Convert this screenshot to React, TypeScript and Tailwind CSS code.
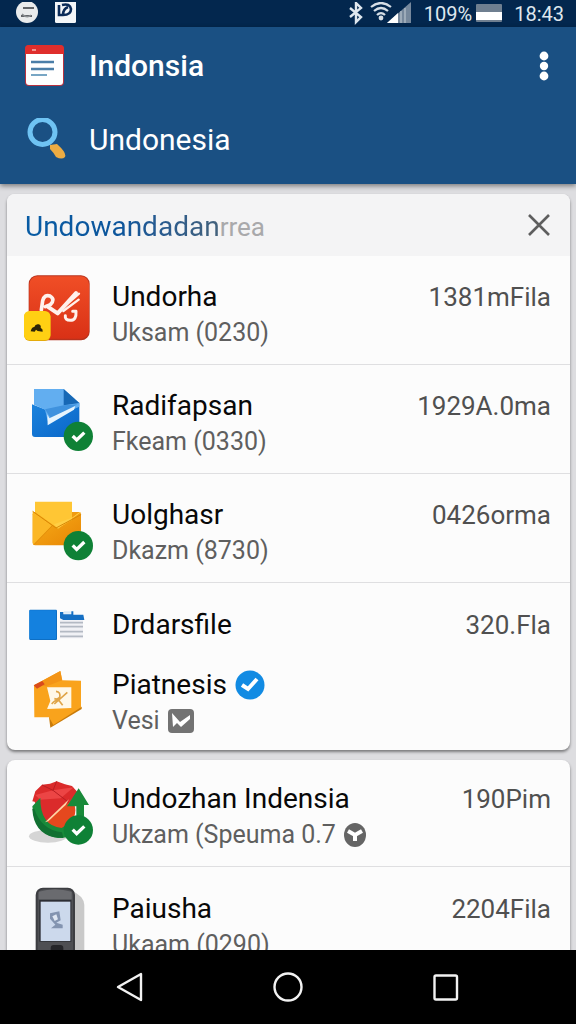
import { ReactNode } from "react";

function CheckBadge({ cx, cy }: { cx: number; cy: number }) {
  return (
    <g>
      <circle cx={cx} cy={cy} r="44" fill="#0f8136" />
      <path
        d={`M${cx - 17} ${cy - 1} l12 12 l23 -22`}
        fill="none"
        stroke="#fff"
        strokeWidth="10"
      />
    </g>
  );
}

function ReaderIcon() {
  return (
    <svg viewBox="60 267 228 210" className="h-[70px] w-[76px] overflow-visible" aria-hidden="true">
      <defs>
        <linearGradient id="reader" x1="0" y1="0" x2="0" y2="1">
          <stop offset="0" stopColor="#f04e26" />
          <stop offset="1" stopColor="#d93116" />
        </linearGradient>
      </defs>
      <rect x="86" y="256" width="183" height="195" rx="26" fill="#b8321d" />
      <rect x="88" y="259" width="179" height="187" rx="24" fill="url(#reader)" />
      <g fill="none" stroke="#fff1ec" strokeLinecap="round" strokeLinejoin="round">
        <path d="M124 360 L128 332 Q134 312 150 318 Q167 328 151 344 L136 350" strokeWidth="11" />
        <path d="M143 350 L173 370 L228 309" strokeWidth="12" />
        <path d="M190 352 L237 311 M190 363 L236 329" strokeWidth="7" />
        <path d="M196 377 Q194 391 211 391 Q230 391 228 364 L218 364" strokeWidth="9" />
      </g>
      <rect x="72" y="365" width="80" height="88" rx="17" fill="#e5ab0b" />
      <rect x="72" y="363" width="79" height="87" rx="16" fill="#ffd013" />
      <path d="M92 424 Q95 411 103 411 Q106 401 116 403 Q124 406 122 413 Q130 418 128 425 L113 423 L108 419 L104 425Z" fill="#2c2408" />
    </svg>
  );
}

function DocumentIcon() {
  return (
    <svg viewBox="60 54 228 210" className="h-[70px] w-[76px] overflow-visible" aria-hidden="true">
      <defs>
        <linearGradient id="doc" x1="0" y1="0" x2="1" y2="1">
          <stop offset="0" stopColor="#1b83dd" />
          <stop offset="1" stopColor="#0a66c8" />
        </linearGradient>
      </defs>
      <path d="M96 103 L140 120 L238 98 V201 H105 Q96 201 96 192Z" fill="url(#doc)" />
      <path d="M102 57 H191 L238 99 V110 L143 152 L135 119 L102 104Z" fill="#62aef0" />
      <path d="M191 57 L238 99 L191 106Z" fill="#1768b5" />
      <path d="M191 106 L232 103 L154 148 L135 118Z" fill="#3f92de" />
      <path d="M142 133 L148 145 L226 108 L222 119 L143 166Z" fill="#e6f4fd" />
      <CheckBadge cx={235} cy={199} />
    </svg>
  );
}

function EnvelopeIcon() {
  return (
    <svg viewBox="60 381 228 210" className="h-[70px] w-[76px] overflow-visible" aria-hidden="true">
      <defs>
        <linearGradient id="mail" x1="0" y1="0" x2="1" y2="1">
          <stop offset="0" stopColor="#f8ae19" />
          <stop offset="1" stopColor="#e78504" />
        </linearGradient>
      </defs>
      <rect x="98" y="426" width="145" height="100" rx="7" fill="url(#mail)" />
      <path d="M105 395 H216 V450 L173 475 L105 426Z" fill="#ffc634" />
      <path d="M98 424 L156 466 L101 523 Q98 521 98 515Z" fill="#fbb726" />
      <path d="M243 427 L174 476 L162 463 L216 443 L238 427Z" fill="#ffcf45" />
      <path d="M98 424 L168 474 L243 434" fill="none" stroke="#d98705" strokeWidth="3" />
      <path d="M157 467 L102 524" fill="none" stroke="#da8909" strokeWidth="2" />
      <CheckBadge cx={235} cy={527} />
    </svg>
  );
}

function FolderFileIcon() {
  return (
    <svg viewBox="60 111 228 108" className="h-9 w-[76px] overflow-visible" aria-hidden="true">
      <rect x="88" y="119" width="83" height="91" rx="3" fill="#0e6fc4" />
      <rect x="88" y="121" width="80" height="86" rx="2" fill="#1481df" />
      <rect x="180" y="148" width="69" height="57" fill="#f0f1f5" />
      <path d="M180 126 H190 V133 H214 V124 H220 V134 H250 L253 150 H190 L180 145Z" fill="#1670c4" />
      <path d="M192 124 H212 V131 H192Z" fill="#dbeaf7" />
      <path d="M180 158 H249 M180 170 H249 M180 185 H249 M180 199 H249" stroke="#b3b9c3" strokeWidth="5" />
    </svg>
  );
}

function PhotoIcon() {
  return (
    <svg viewBox="60 294 228 210" className="h-[70px] w-[76px] overflow-visible" aria-hidden="true">
      <path d="M147 445 L245 413 V420 L151 476Z" fill="#c97b0a" />
      <path d="M102 349 L181 306 L187 334 L243 335 V415 L160 468 L147 445 H103Z" fill="#f9a31c" />
      <path d="M102 349 L181 306 L186 334 L140 352Z" fill="#f39416" />
      <path d="M101 349 L127 336 L134 346 L111 359Z" fill="#d94b1d" />
      <path d="M141 355 H214 V417 L141 420 L151 396Z" fill="#fff8e7" />
      <path d="M168 367 Q183 369 179 385 Q173 392 163 389 M174 391 L188 409 M163 405 L202 370 M155 405 Q168 390 176 396" fill="none" stroke="#e0a547" strokeWidth="5" />
    </svg>
  );
}

function SyncIcon() {
  return (
    <svg viewBox="60 36 228 210" className="h-[70px] w-[76px] overflow-visible" aria-hidden="true">
      <ellipse cx="144" cy="202" rx="57" ry="19" fill="#d5d5d5" />
      <circle cx="168" cy="124" r="58" fill="#e5481e" />
      <path d="M97 97 L106 67 L126 47 L150 44 L170 37 L195 46 L216 51 L235 72 L205 101 L139 155 L116 126 L104 98Z" fill="#db2b2b" />
      <path d="M106 78 L159 64 L221 55 L182 88 L120 92Z" fill="#ec4545" />
      <path d="M126 48 L159 64 L170 37 M159 64 L206 100" fill="none" stroke="#b81e22" strokeWidth="3" />
      <path d="M97 112 L121 86 Q120 170 185 177 L229 148 V112 H201 L236 58 L267 108 H252 V140 Q242 207 174 207 Q104 198 97 112Z" fill="#198a3a" />
      <path d="M97 120 Q101 191 162 205 L190 207 L186 190 Q125 184 103 120Z" fill="#117031" />
      <path d="M135 160 L207 91 L197 108 L145 157Z" fill="#ffd5a6" />
      <CheckBadge cx={235} cy={183} />
    </svg>
  );
}

function PhoneIcon() {
  return (
    <svg viewBox="60 363 228 210" className="h-[70px] w-[76px] overflow-visible" aria-hidden="true">
      <path d="M210 360 Q252 377 253 405 V640 H200Z" fill="#c9c9c9" />
      <rect x="107" y="353" width="118" height="300" rx="22" fill="#3c3d41" />
      <rect x="113" y="358" width="106" height="290" rx="18" fill="#4e4f53" />
      <path d="M116 365 Q165 350 215 365 V388 H116Z" fill="#6a6b6f" />
      <rect x="118" y="390" width="96" height="125" fill="#2c2e34" />
      <rect x="122" y="395" width="89" height="118" fill="#ccd9ec" />
      <path d="M150 430 L178 424 L182 451 L169 458 L188 464 V475 H153 L166 464 L150 446Z" fill="#8394b0" />
      <path d="M157 439 L169 433 L174 448 L164 453Z" fill="#dfe7f2" />
      <rect x="152" y="525" width="38" height="30" rx="9" fill="#242529" />
    </svg>
  );
}

function VerifiedIcon() {
  return (
    <svg viewBox="0 0 30 30" className="h-[30px] w-[30px]" aria-hidden="true">
      <circle cx="15" cy="15" r="14.5" fill="#128be3" />
      <path d="M7 15 L13 19 L22 9" fill="none" stroke="#fff" strokeWidth="4" />
    </svg>
  );
}

function TickBoxIcon() {
  return (
    <svg viewBox="0 0 26 26" className="h-[26px] w-[26px]" aria-hidden="true">
      <rect x="0" y="1" width="26" height="24" rx="4" fill="#737373" />
      <path d="M4 5 L12 14 L22 7 L22 11 L13 19 L9 15 L5 19Z" fill="#fff" />
    </svg>
  );
}

function BranchIcon() {
  return (
    <svg viewBox="0 0 22 24" className="h-6 w-[22px]" aria-hidden="true">
      <ellipse cx="11" cy="12" rx="11" ry="12" fill="#656565" />
      <path d="M4 8 L11 12 L18 8 M11 11 V18" fill="none" stroke="#fff" strokeWidth="4" />
    </svg>
  );
}

type RowProps = {
  icon: ReactNode;
  name: string;
  detail?: string;
  size?: string;
  nameBadge?: ReactNode;
  detailBadge?: ReactNode;
  className?: string;
};

function AppRow({ icon, name, detail, size, nameBadge, detailBadge, className = "pt-[23px] pb-[13px] border-b" }: RowProps) {
  return (
    <li className={`flex items-start gap-4 border-[#dfdfe1] pl-[13px] pr-[19px] ${className}`}>
      <div className="shrink-0">{icon}</div>
      <div className="min-w-0 flex-1 whitespace-nowrap">
        <h3 className="flex items-center gap-2 text-[28px] leading-9 text-[#080808]">
          {name}
          {nameBadge}
        </h3>
        {detail && (
          <p className="flex items-center gap-2 text-[25px] leading-9 text-[#5f5f5f]">
            {detail}
            {detailBadge}
          </p>
        )}
      </div>
      {size && <span className="shrink-0 text-[26px] leading-9 text-[#505050]">{size}</span>}
    </li>
  );
}

export default function App() {
  return (
    <div className="flex h-screen flex-col overflow-hidden bg-[#dddde0] font-['Roboto',sans-serif]">
      <div className="flex h-[27px] shrink-0 items-center justify-between bg-[#03274e] pl-4 pr-3 text-[#dfe7ee]">
        <div className="flex items-center gap-4">
          <svg viewBox="0 0 22 24" className="h-6 w-[22px]" aria-hidden="true">
            <ellipse cx="11" cy="10" rx="11" ry="11" fill="#e9ebec" />
            <path d="M7 6 H18 M5 14 H16" stroke="#34383c" strokeWidth="1.5" />
            <path d="M6 12 Q11 17 15 13" fill="none" stroke="#8c9093" strokeWidth="1.5" />
          </svg>
          <svg viewBox="0 0 22 24" className="h-6 w-[22px]" aria-hidden="true">
            <rect x="1" y="-2" width="21" height="23" rx="1.5" fill="#f4f6f8" />
            <path d="M5 3 V13 H9 M8 3 Q16 1 17 7 Q17 13 9 13 Q9 7 14 5" fill="none" stroke="#0b2b58" strokeWidth="2.6" />
          </svg>
        </div>
        <div className="flex items-center">
          <svg viewBox="0 0 16 24" className="h-6 w-4" aria-hidden="true">
            <path d="M2 6 L13 15 L8 20 V1 L13 6 L2 15" fill="none" stroke="currentColor" strokeWidth="2.4" />
          </svg>
          <svg viewBox="0 0 42 24" className="ml-[6px] h-6 w-[42px]" aria-hidden="true">
            <g fill="none" stroke="#d6dee6" strokeWidth="2.2">
              <path d="M1 5 Q11 -3 21 5" />
              <path d="M4 9 Q11 3 18 9" />
              <path d="M7 13 Q11 9 15 13" />
            </g>
            <circle cx="11" cy="16" r="2.4" fill="#d6dee6" />
            <path d="M17 21 L41 0 V21Z" fill="#76889c" />
            <path d="M17 21 L28 11 V21Z" fill="#fff" />
            <path d="M31 9 V21 M35 6 V21" stroke="#aab6c2" strokeWidth="1.5" />
          </svg>
          <span className="ml-3 text-xl leading-6">109%</span>
          <svg viewBox="0 0 26 20" className="ml-1 h-5 w-[26px]" aria-hidden="true">
            <rect width="26" height="18" rx="1" fill="#6f7f90" />
            <rect y="8" width="26" height="8" fill="#fff" />
          </svg>
          <span className="ml-3 text-xl leading-6">18:43</span>
        </div>
      </div>

      <header className="relative shrink-0 bg-[#1a5083] px-6 pt-[2px] pb-[7px] text-white shadow-[0_2px_5px_rgba(0,0,0,0.45)]">
        <div className="flex h-[74px] items-center gap-[23px]">
          <svg viewBox="0 0 42 44" className="h-11 w-[42px] shrink-0" aria-hidden="true">
            <rect x="1" y="1" width="39" height="41" rx="4" fill="#b83240" />
            <path d="M2 10 H39 V38 Q39 41 36 41 H5 Q2 41 2 38Z" fill="#fff" />
            <path d="M1 10 V5 Q1 1 5 1 H36 Q40 1 40 5 V10Z" fill="#df2e2c" />
            <path d="M8 6 H12" stroke="#f8b7b1" strokeWidth="1.5" />
            <path d="M7 18 H30 M7 25 H30" stroke="#4a7ea8" strokeWidth="2.5" />
            <path d="M7 31 H23" stroke="#78a6c4" strokeWidth="2" />
          </svg>
          <h1 className="flex-1 text-[30px] leading-9 font-medium">Indonsia</h1>
          <button type="button" aria-label="More options" className="-mr-1 flex h-10 w-6 items-center justify-center">
            <svg viewBox="0 0 10 32" className="h-8 w-[10px]" fill="#fff" aria-hidden="true">
              <circle cx="5" cy="6" r="4.4" />
              <circle cx="5" cy="16" r="4.2" />
              <circle cx="5" cy="26" r="4.4" />
            </svg>
          </button>
        </div>
        <div className="flex h-[74px] items-center gap-[23px]">
          <svg viewBox="0 0 42 44" className="h-11 w-[42px] shrink-0" aria-hidden="true">
            <path d="M26 27 L33 26 Q43 35 41 39 Q38 42 32 39 Q30 35 26 31Z" fill="#edac43" />
            <circle cx="18.5" cy="14" r="12.5" fill="#1a5083" stroke="#6fc3f3" strokeWidth="5" />
          </svg>
          <input
            type="text"
            aria-label="Search"
            defaultValue="Undonesia"
            className="min-w-0 flex-1 bg-transparent text-[30px] leading-9 outline-none"
          />
        </div>
      </header>

      <main className="min-h-0 flex-1 space-y-[10px] overflow-hidden pt-[10px] pl-[7px] pr-[6px]">
        <section className="rounded-lg bg-[#fcfcfc] pb-[11px] shadow-[0_2px_3px_rgba(0,0,0,0.45)]">
          <div className="flex h-[62px] items-center justify-between rounded-t-lg bg-[#f4f4f5] pt-1 pl-[18px] pr-[18px]">
            <h2 className="flex items-baseline text-[28px] leading-9">
              <span className="bg-linear-to-r from-[#075ba4] via-[#0d559b] to-[#43617b] bg-clip-text text-transparent">
                Undowandadan
              </span>
              <span className="text-[26px] text-[#a9a9ab]">rrea</span>
            </h2>
            <button type="button" aria-label="Close">
              <svg viewBox="0 0 26 26" className="h-[26px] w-[26px]" aria-hidden="true">
                <path d="M3 1 L23 21 M23 1 L3 21" stroke="#5e5e5e" strokeWidth="2.6" />
              </svg>
            </button>
          </div>
          <ul>
            <AppRow icon={<ReaderIcon />} name="Undorha" detail="Uksam (0230)" size="1381mFila" />
            <AppRow icon={<DocumentIcon />} name="Radifapsan" detail="Fkeam (0330)" size="1929A.0ma" />
            <AppRow icon={<EnvelopeIcon />} name="Uolghasr" detail="Dkazm (8730)" size="0426orma" />
            <AppRow icon={<FolderFileIcon />} name="Drdarsfile" size="320.Fla" className="pt-6" />
            <AppRow
              icon={<PhotoIcon />}
              name="Piatnesis"
              nameBadge={<VerifiedIcon />}
              detail="Vesi"
              detailBadge={<TickBoxIcon />}
              className="pt-6"
            />
          </ul>
        </section>

        <section className="rounded-lg bg-[#fcfcfc] shadow-[0_2px_3px_rgba(0,0,0,0.45)]">
          <ul>
            <AppRow
              icon={<SyncIcon />}
              name="Undozhan Indensia"
              detail="Ukzam (Speuma 0.7"
              detailBadge={<BranchIcon />}
              size="190Pim"
              className="pt-[21px] pb-[13px] border-b"
            />
            <AppRow icon={<PhoneIcon />} name="Paiusha" detail="Ukaam (0290)" size="2204Fila" className="pt-6 pb-[13px]" />
          </ul>
        </section>
      </main>

      <nav className="relative flex h-[74px] shrink-0 items-center justify-between bg-black px-[20%]">
        <button type="button" aria-label="Back">
          <svg viewBox="0 0 30 30" className="h-[30px] w-[30px]" aria-hidden="true">
            <path d="M3 15 L26 2 V28Z" fill="none" stroke="#f2f2f2" strokeWidth="2.4" strokeLinejoin="round" />
          </svg>
        </button>
        <button type="button" aria-label="Home">
          <svg viewBox="0 0 30 30" className="h-[30px] w-[30px]" aria-hidden="true">
            <circle cx="15" cy="15" r="13.5" fill="none" stroke="#f2f2f2" strokeWidth="2.4" />
          </svg>
        </button>
        <button type="button" aria-label="Recent apps">
          <svg viewBox="0 0 30 30" className="h-[30px] w-[30px]" aria-hidden="true">
            <rect x="3.5" y="3.5" width="22.5" height="24" rx="1.5" fill="none" stroke="#f2f2f2" strokeWidth="2.4" />
          </svg>
        </button>
      </nav>
    </div>
  );
}
